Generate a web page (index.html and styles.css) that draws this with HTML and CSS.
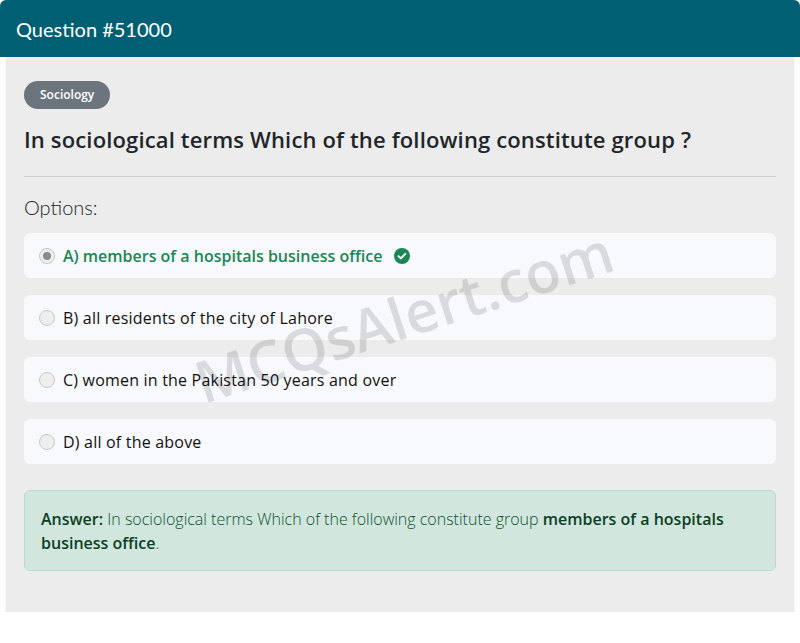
FILE: index.html
```html
<!DOCTYPE html>
<html>
<head>
<meta charset="utf-8">
<link rel="stylesheet" href="styles.css">
</head>
<body>
<div class="card">
  <div class="card-header">Question #51000</div>
  <div class="card-body">
    <span class="badge">Sociology</span>
    <h1 class="question">In sociological terms Which of the following constitute group ?</h1>
    <hr class="divider">
    <div class="options-label">Options:</div>
    <div class="options">
      <div class="option correct"><span class="radio checked"></span><span>A) members of a hospitals business office</span>
        <svg class="check" width="16" height="16" viewBox="0 0 16 16"><circle cx="8" cy="8" r="8" fill="#198754"/><path d="M4.6 8.2l2.3 2.2 4.4-4.6" fill="none" stroke="#fff" stroke-width="1.9" stroke-linecap="round" stroke-linejoin="round"/></svg>
      </div>
      <div class="option"><span class="radio"></span><span>B) all residents of the city of Lahore</span></div>
      <div class="option"><span class="radio"></span><span>C) women in the Pakistan 50 years and over</span></div>
      <div class="option"><span class="radio"></span><span>D) all of the above</span></div>
    </div>
    <div class="answer"><span class="line"><b>Answer:</b> In sociological terms Which of the following constitute group <b>members of a hospitals</b></span> <span class="line"><b>business office</b>.</span></div>
    <div class="watermark">MCQsAlert.com</div>
  </div>
</div>
</body>
</html>
```
FILE: styles.css
```css
* { box-sizing: border-box; }
body {
  margin: 0;
  background: #fff;
  font-family: "Open Sans", Lato, sans-serif;
  color: #212529;
}
.card {
  width: 800px;
}
.card-header {
  background: #005f73;
  color: #fff;
  height: 57px;
  padding: 0 16px;
  display: flex;
  align-items: center;
  font-family: Lato, sans-serif;
  font-size: 20px;
  font-weight: 400;
  border-radius: 6px 6px 0 0;
}
.card-body {
  position: relative;
  margin: 0 6px;
  background: #ececec;
  padding: 24px 18px 41px;
  height: 555px;
  overflow: hidden;
  box-shadow: 0 2px 4px rgba(0,0,0,0.06);
}
.badge {
  display: inline-block;
  background: #6c757d;
  color: #fff;
  font-size: 12px;
  font-weight: 600;
  height: 28px;
  line-height: 28px;
  padding: 0 16px;
  border-radius: 14px;
}
.question {
  margin: 13px 0 0;
  font-size: 22px;
  font-weight: 600;
  letter-spacing: 0.15px;
  line-height: 34px;
  color: #212529;
}
.divider {
  margin: 20px 0 15px;
  border: 0;
  border-top: 1px solid #d0d0d0;
}
.options-label {
  font-family: Lato, sans-serif;
  font-size: 20px;
  font-weight: 300;
  line-height: 30px;
  margin-bottom: 11px;
}
.options {
  display: flex;
  flex-direction: column;
  gap: 17px;
}
.option {
  position: relative;
  background: #f8f9fc;
  border-radius: 6px;
  height: 45px;
  display: flex;
  align-items: center;
  padding: 0 15px;
  font-size: 16px;
  font-weight: 500;
  letter-spacing: 0.2px;
  color: #111;
}
.option.correct { color: #198754; font-weight: 600; letter-spacing: 0; }
.radio {
  width: 16px;
  height: 16px;
  border-radius: 50%;
  border: 1px solid #c8c8c8;
  background: #eee;
  margin-right: 8px;
  flex: none;
  position: relative;
}
.radio.checked::after {
  content: "";
  position: absolute;
  left: 3px; top: 3px;
  width: 8px; height: 8px;
  border-radius: 50%;
  background: #8a8a8a;
}
.check { margin-left: 12px; flex: none; }
.answer {
  margin-top: 26px;
  background: #d1e7dd;
  border: 1px solid #badbcc;
  border-radius: 6px;
  padding: 16px 16px 15px;
  font-size: 16px;
  line-height: 24px;
  font-weight: 300;
  color: #0f5132;
}
.answer .line { display: block; white-space: nowrap; }
.answer b { font-weight: 600; color: #0c3e26; }
.watermark {
  position: absolute;
  left: 180px;
  top: 230px;
  font-size: 58px;
  line-height: 1;
  font-weight: 600;
  color: rgba(0,0,0,0.12);
  transform: rotate(-18deg);
  transform-origin: center;
  pointer-events: none;
  white-space: nowrap;
  font-family: "Open Sans", sans-serif;
}
```
